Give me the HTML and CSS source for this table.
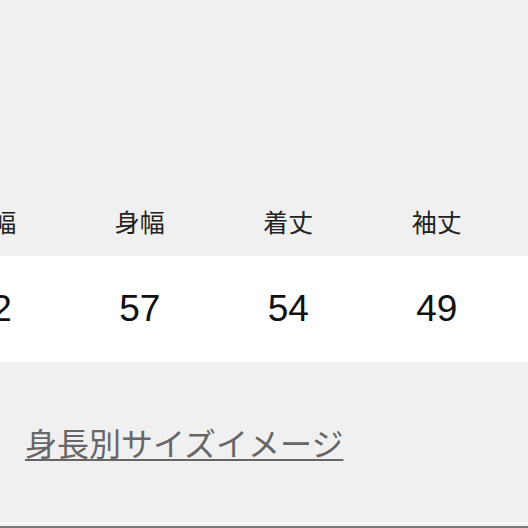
FILE: index.html
```html
<!DOCTYPE html>
<html lang="ja">
<head>
<meta charset="utf-8">
<link rel="stylesheet" href="styles.css">
</head>
<body>
<div class="page">
  <div class="size-table">
    <div class="row head">
      <div class="cell">肩幅</div>
      <div class="cell">身幅</div>
      <div class="cell">着丈</div>
      <div class="cell">袖丈</div>
      <div class="cell last">裄丈</div>
    </div>
    <div class="row values">
      <div class="cell">42</div>
      <div class="cell">57</div>
      <div class="cell">54</div>
      <div class="cell">49</div>
      <div class="cell last">80</div>
    </div>
  </div>
  <div class="link-wrap"><a class="size-link" href="#">身長別サイズイメージ</a></div>
  <div class="footer-line"></div>
</div>
</body>
</html>
```

FILE: styles.css
```css
html, body {
  margin: 0;
  padding: 0;
  background: #f0f0f0;
  overflow: hidden;
  width: 528px;
  height: 528px;
}
.page {
  padding-top: 186px;
  font-family: "Liberation Sans", "Noto Sans CJK JP", sans-serif;
}
.size-table {
  margin-left: -83px;
  width: 760px;
}
.row {
  display: flex;
  align-items: center;
}
.cell {
  flex: none;
  width: 148.5px;
  text-align: center;
}
.head {
  height: 70px;
  font-family: "Noto Sans CJK JP", sans-serif;
  font-size: 25px;
  color: #222;
}
.head .last {
  text-align: left;
  padding-left: 21px;
  box-sizing: border-box;
}
.values .last {
  text-align: left;
  padding-left: 30px;
  box-sizing: border-box;
}
.values {
  height: 106px;
  background: #fff;
  font-size: 37px;
  color: #111;
}
.link-wrap {
  margin-top: 60px;
  padding-left: 25px;
  height: 40px;
  line-height: 40px;
}
.size-link {
  font-family: "Noto Sans CJK JP", sans-serif;
  font-size: 32px;
  color: #666;
  text-decoration: underline;
  text-decoration-thickness: 2px;
  text-underline-offset: 3px;
}
.footer-line {
  margin-top: 60px;
  border-top: 2px solid #fafafa;
  height: 2px;
  border-bottom: 2px solid #7a7a7a;
}
```
